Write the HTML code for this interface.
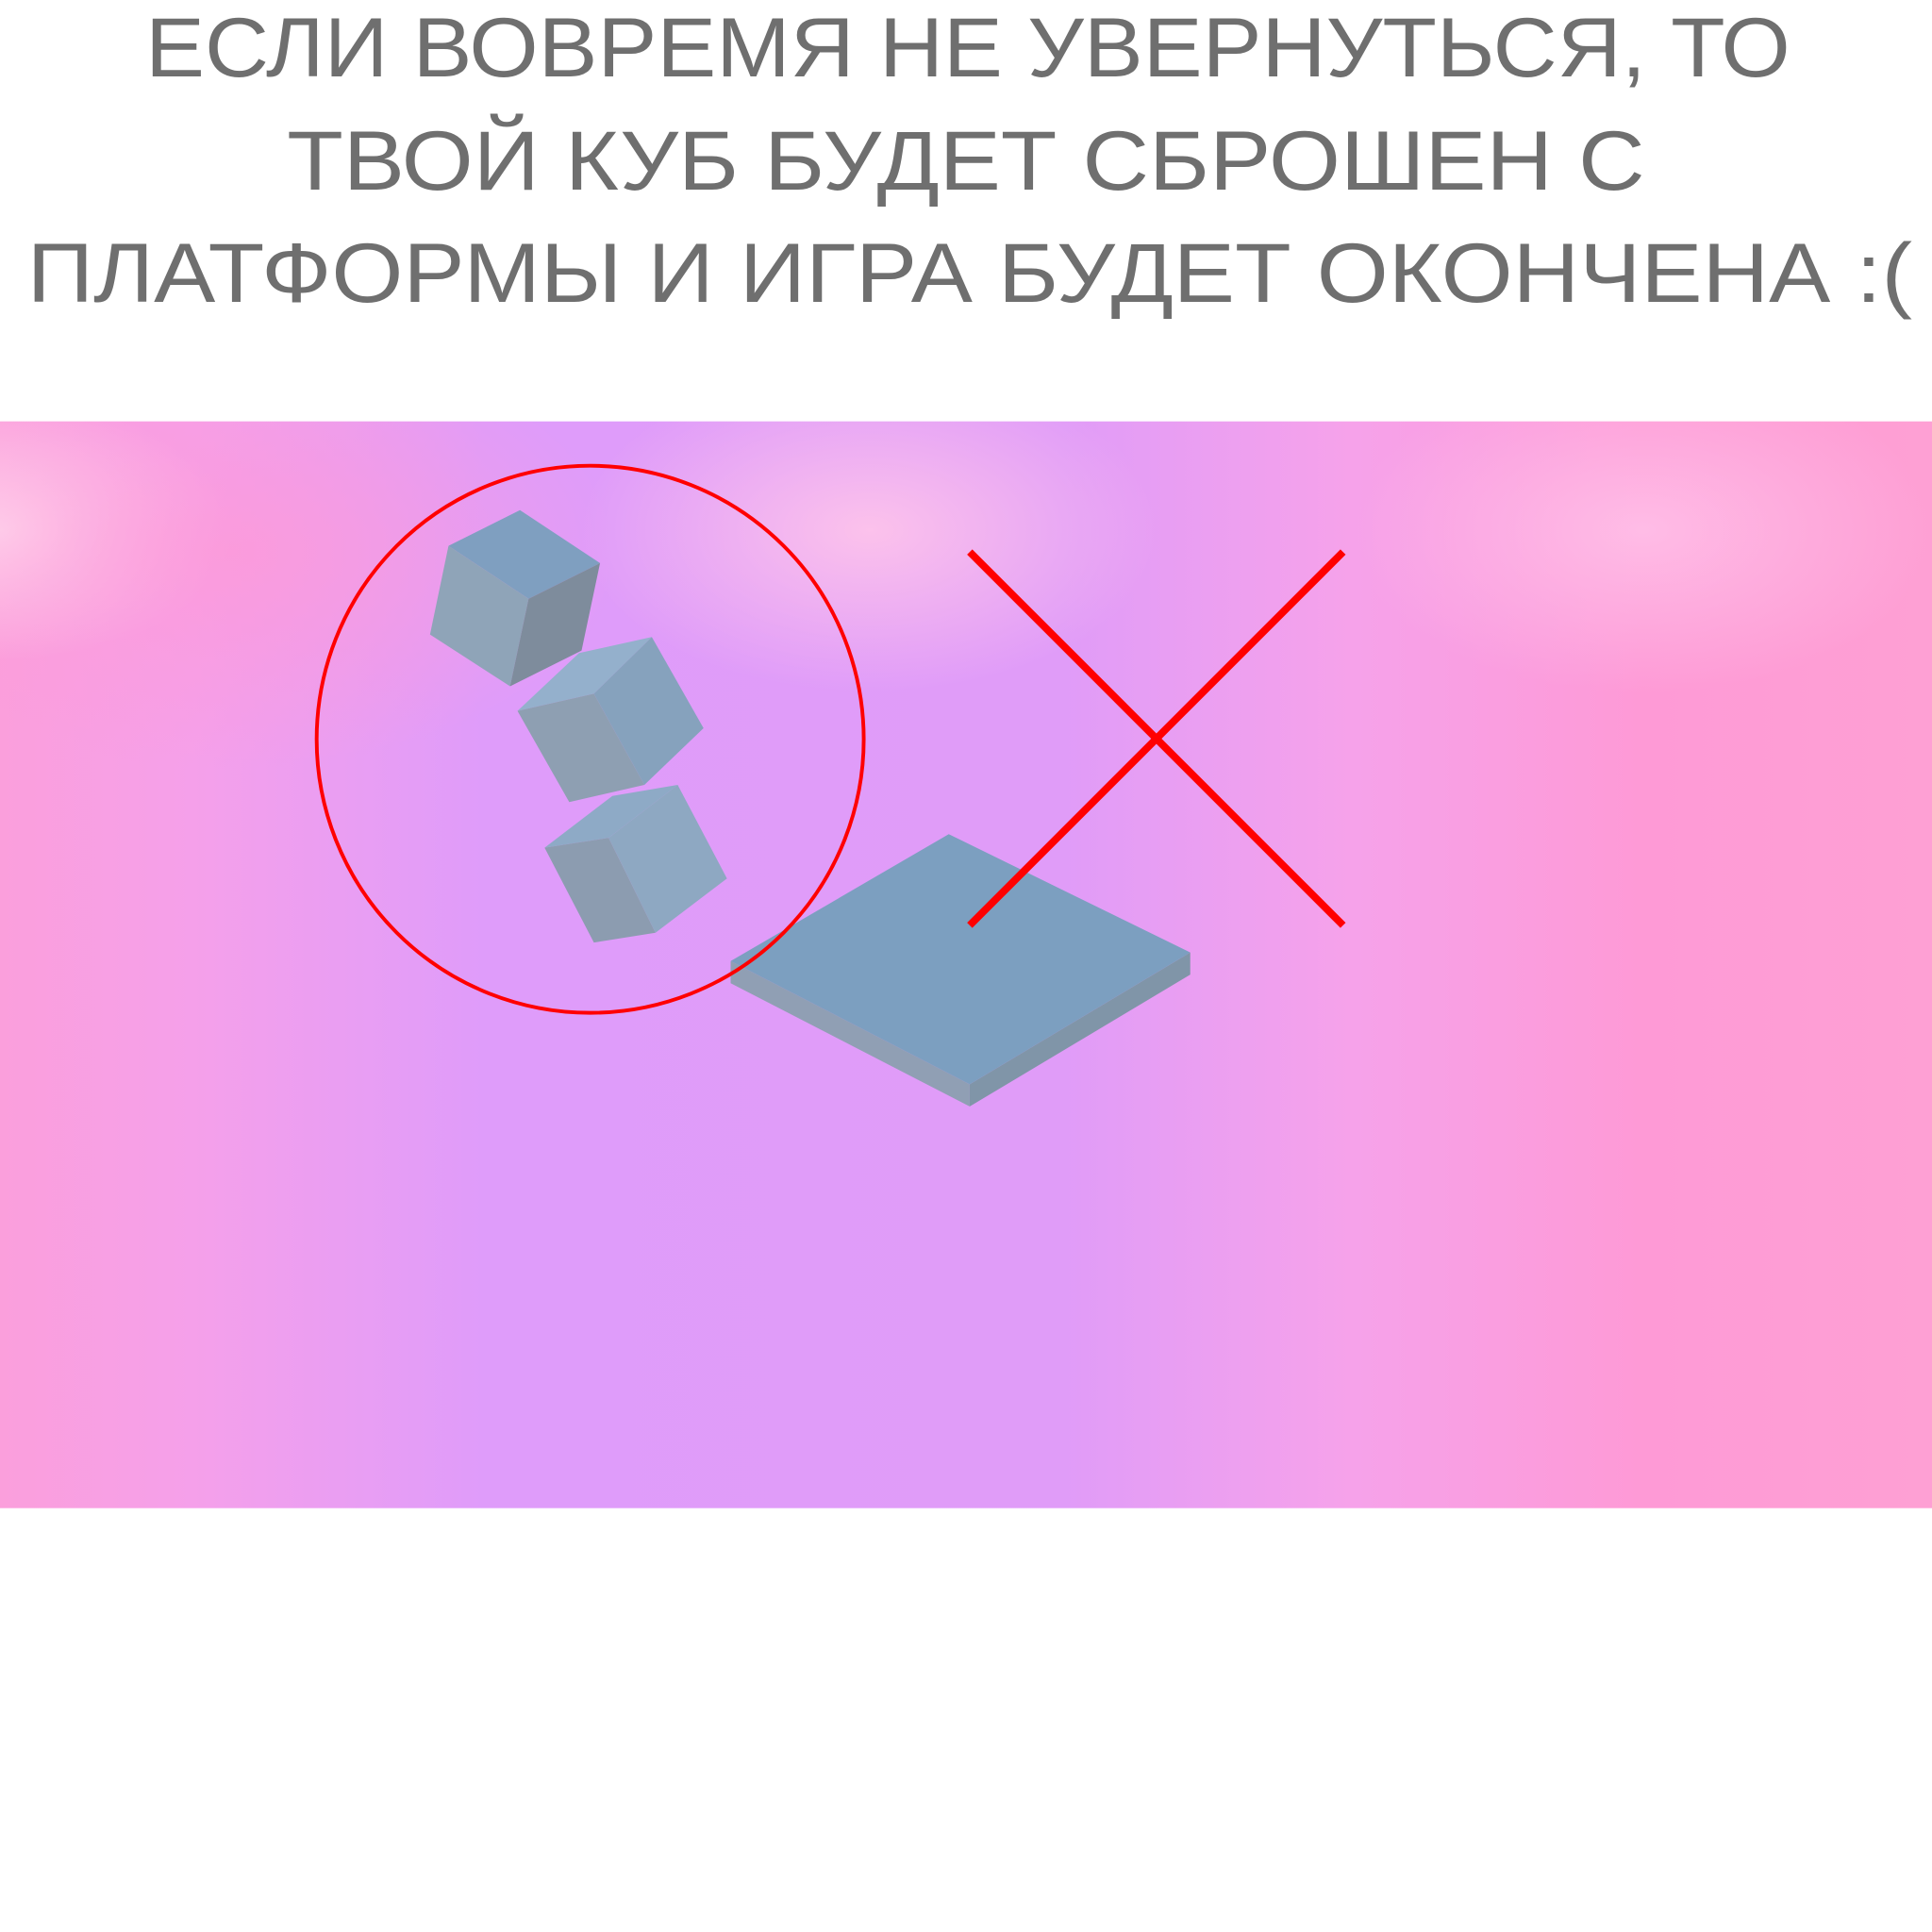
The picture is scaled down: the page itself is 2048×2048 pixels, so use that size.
<!DOCTYPE html>
<html><head><meta charset="utf-8"><style>
html,body{margin:0;padding:0;background:#fff;width:2048px;height:2048px;overflow:hidden}
svg{display:block}
</style></head><body>
<svg width="2048" height="2048" viewBox="0 0 1568 1568" xmlns="http://www.w3.org/2000/svg">
<defs>
<linearGradient id="base" x1="0" y1="0" x2="1" y2="0">
<stop offset="0" stop-color="#fb9fdc"/>
<stop offset="0.1" stop-color="#f5a0ea"/>
<stop offset="0.25" stop-color="#df9cfa"/>
<stop offset="0.55" stop-color="#e09cf8"/>
<stop offset="0.7" stop-color="#f6a2ea"/>
<stop offset="0.85" stop-color="#fe9ad6"/>
<stop offset="1" stop-color="#fea0d4"/>
</linearGradient>
<radialGradient id="p1" cx="0.45" cy="0.1" r="0.15"><stop offset="0" stop-color="#ffc6ea" stop-opacity="0.9"/><stop offset="1" stop-color="#ffc6ea" stop-opacity="0"/></radialGradient>
<radialGradient id="p2" cx="0.85" cy="0.1" r="0.15"><stop offset="0" stop-color="#ffc0e8" stop-opacity="0.9"/><stop offset="1" stop-color="#ffc0e8" stop-opacity="0"/></radialGradient>
<radialGradient id="p3" cx="0.0" cy="0.1" r="0.12"><stop offset="0" stop-color="#ffe0f0" stop-opacity="1"/><stop offset="1" stop-color="#ffe0f0" stop-opacity="0"/></radialGradient>
<radialGradient id="p4" cx="0.12" cy="0.12" r="0.2"><stop offset="0" stop-color="#fd9ad8" stop-opacity="0.8"/><stop offset="1" stop-color="#fd9ad8" stop-opacity="0"/></radialGradient>
</defs>
<g fill="#6f6f6f" font-family="'Liberation Sans','DejaVu Sans',sans-serif" font-size="68">
<text x="118" y="62" textLength="1335" lengthAdjust="spacingAndGlyphs">ЕСЛИ ВОВРЕМЯ НЕ УВЕРНУТЬСЯ, ТО</text>
<text x="233" y="154" textLength="1102" lengthAdjust="spacingAndGlyphs">ТВОЙ КУБ БУДЕТ СБРОШЕН С</text>
<text x="22" y="245" textLength="1530" lengthAdjust="spacingAndGlyphs">ПЛАТФОРМЫ И ИГРА БУДЕТ ОКОНЧЕНА :(</text>
</g>
<rect x="0" y="342" width="1568" height="882" fill="url(#base)"/>
<rect x="0" y="342" width="1568" height="882" fill="url(#p1)"/>
<rect x="0" y="342" width="1568" height="882" fill="url(#p2)"/>
<rect x="0" y="342" width="1568" height="882" fill="url(#p3)"/>
<rect x="0" y="342" width="1568" height="882" fill="url(#p4)"/>
<!-- platform -->
<polygon points="593,780 787,880 787,898 593,798" fill="#909fb4"/>
<polygon points="787,880 966,773 966,791 787,898" fill="#8095a8"/>
<polygon points="593,780 770,677 966,773 787,880" fill="#7c9fc0"/>
<!-- cubes -->
<polygon points="364,443 422,414 487,457 429,486" fill="#7f9fc0"/>
<polygon points="364,443 429,486 414,557 349,515" fill="#8fa4b8"/>
<polygon points="429,486 487,457 472,528 414,557" fill="#7e8c9c"/>
<polygon points="420,577 470,530 529,517 482,563" fill="#94b0cc"/>
<polygon points="420,577 482,563 523,637 462,651" fill="#8e9fb2"/>
<polygon points="482,563 529,517 571,591 523,637" fill="#86a2bd"/>
<polygon points="442,688 497,646 550,637 494,680" fill="#8eaac6"/>
<polygon points="442,688 494,680 532,757 482,765" fill="#8c9cb0"/>
<polygon points="494,680 550,637 590,713 532,757" fill="#8ea8c2"/>
<circle cx="479" cy="600" r="222" fill="none" stroke="#ff0000" stroke-width="3"/>
<line x1="787" y1="448" x2="1090" y2="751" stroke="#ff0000" stroke-width="6"/>
<line x1="1090" y1="448" x2="787" y2="751" stroke="#ff0000" stroke-width="6"/>
</svg>
</body></html>
